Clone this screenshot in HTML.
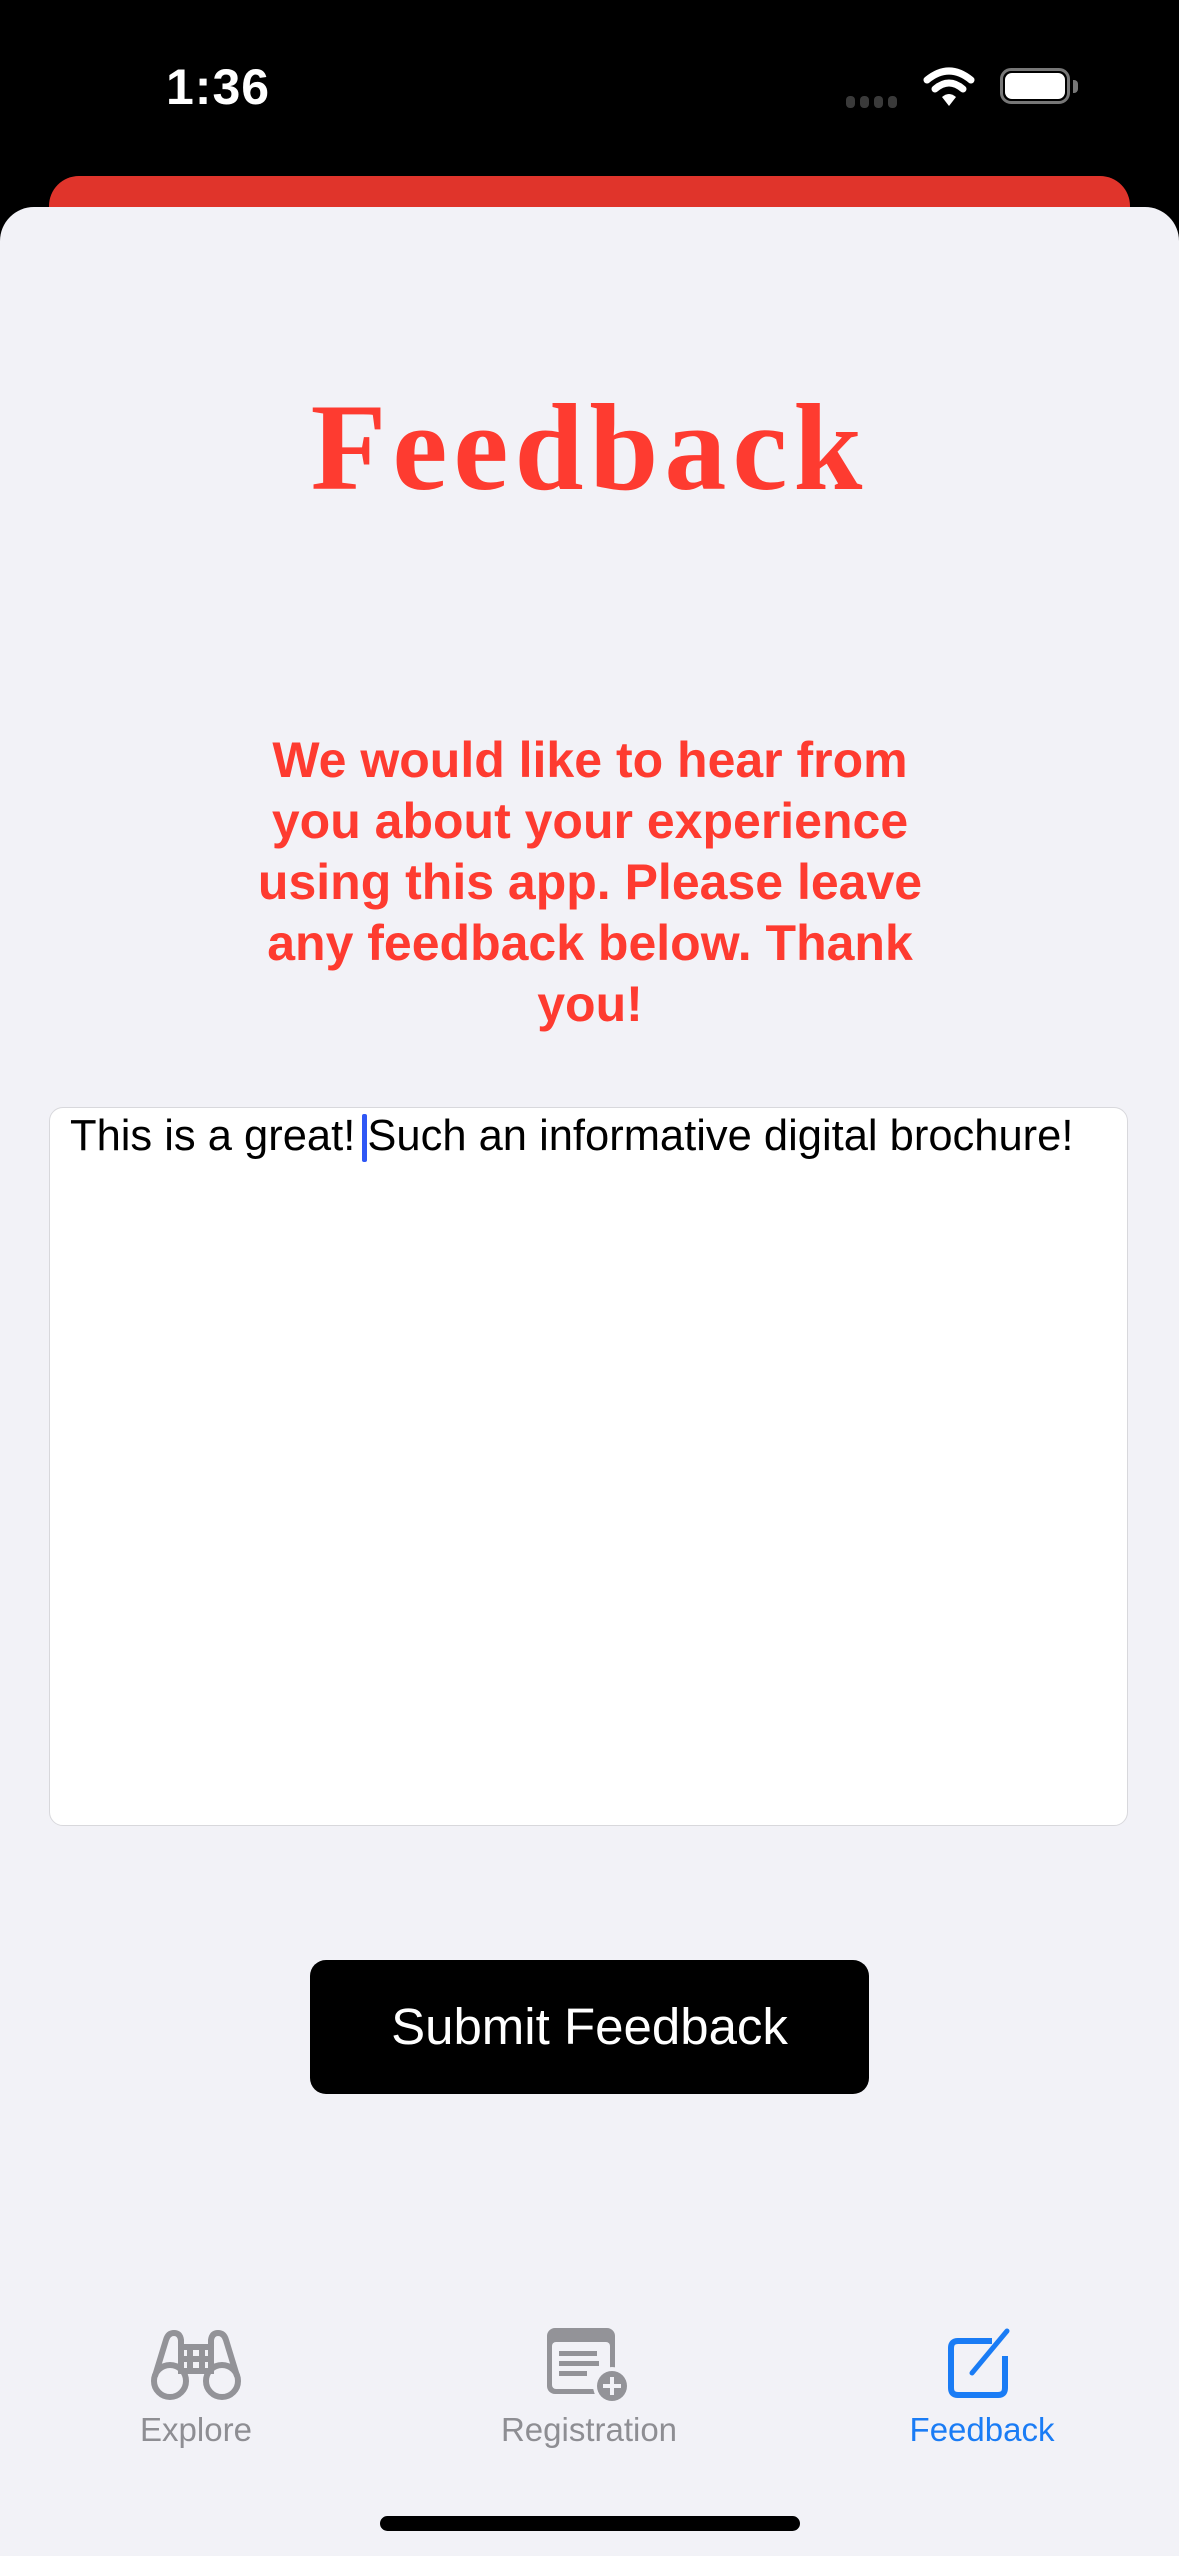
<!DOCTYPE html>
<html><head><meta charset="utf-8"><style>
body{margin:0;width:1179px;height:2556px;background:#000;position:relative;overflow:hidden;font-family:"Liberation Sans",sans-serif}
.abs{position:absolute}
</style></head><body>
<div class="abs" style="left:166px;top:58px;font-size:50px;font-weight:bold;color:#fff;letter-spacing:1px">1:36</div>
<div class="abs" style="left:846px;top:96px;width:12px;height:12px;display:flex;gap:5px">
<div style="width:9px;height:12px;border-radius:4px;background:#3a3a3a;flex:none"></div><div style="width:9px;height:12px;border-radius:4px;background:#3a3a3a;flex:none"></div><div style="width:9px;height:12px;border-radius:4px;background:#3a3a3a;flex:none"></div><div style="width:9px;height:12px;border-radius:4px;background:#3a3a3a;flex:none"></div></div>
<svg class="abs" style="left:922px;top:66px" width="54" height="42" viewBox="0 0 54 42"><g fill="none" stroke="#fff" stroke-width="7" stroke-linecap="round"><path d="M5 14 Q27 -4 49 14"/><path d="M13 23 Q27 11 41 23"/></g><path d="M20 31 Q27 25 34 31 L27 40 Z" fill="#fff"/></svg>
<div class="abs" style="left:1000px;top:68px;width:70px;height:36px;border:3px solid #777;border-radius:11px;box-sizing:border-box"></div>
<div class="abs" style="left:1005px;top:73px;width:60px;height:26px;background:#fff;border-radius:7px"></div>
<div class="abs" style="left:1073px;top:80px;width:5px;height:13px;background:#777;border-radius:0 4px 4px 0"></div>

<div class="abs" style="left:49px;top:176px;width:1081px;height:60px;background:#e0342b;border-radius:30px 30px 0 0"></div>
<div class="abs" style="left:0;top:207px;width:1179px;height:2349px;background:#f2f2f7;border-radius:34px 34px 0 0"></div>

<div class="abs" style="left:0;top:386px;width:1179px;text-align:center;font-family:'Liberation Serif',serif;font-weight:bold;font-size:124px;letter-spacing:6px;color:#fe3b30;line-height:1">Feedback</div>
<div class="abs" style="left:240px;top:730px;width:700px;text-align:center;font-size:50px;font-weight:bold;color:#fe3b30;line-height:61px">We would like to hear from you about your experience using this app. Please leave any feedback below. Thank you!</div>

<div class="abs" style="left:49px;top:1107px;width:1079px;height:719px;background:#fff;border:1.5px solid #d8d8dc;border-radius:14px;box-sizing:border-box"></div>
<div class="abs" style="left:70px;top:1112px;font-size:43.5px;color:#000;white-space:nowrap">This is a great! Such an informative digital brochure!</div>
<div class="abs" style="left:362px;top:1114px;width:5px;height:48px;background:#2f57f5;border-radius:2px"></div>

<div class="abs" style="left:310px;top:1960px;width:559px;height:134px;background:#000;border-radius:16px;color:#fff;font-size:51px;text-align:center;line-height:134px">Submit Feedback</div>

<svg class="abs" style="left:150px;top:2330px" width="92" height="72" viewBox="0 0 92 72" fill="none" stroke="#939398" stroke-width="6"><circle cx="20" cy="51" r="16"/><circle cx="72" cy="51" r="16"/><path d="M5 46 L16 10 Q18 3 24 3 Q30 3 31 10 L31 44 M87 46 L76 10 Q74 3 68 3 Q62 3 61 10 L61 44 M31 17H61 M31 29H61 M31 41H61 M40 14V44 M52 14V44"/></svg>
<svg class="abs" style="left:547px;top:2328px" width="86" height="80" viewBox="0 0 86 80"><rect x="0" y="0" width="68" height="66" rx="8" fill="#939398"/><rect x="5" y="14" width="58" height="47" rx="4" fill="#f2f2f7"/><rect x="12" y="23" width="38" height="5" fill="#939398"/><rect x="12" y="33" width="40" height="5" fill="#939398"/><rect x="12" y="43" width="28" height="5" fill="#939398"/><circle cx="65" cy="58" r="19" fill="#f2f2f7"/><circle cx="65" cy="58" r="15" fill="#939398"/><path d="M65 49V67M56 58H74" stroke="#f2f2f7" stroke-width="4"/></svg>
<svg class="abs" style="left:946px;top:2326px" width="74" height="74" viewBox="0 0 74 74" fill="none" stroke="#1a7cf5" stroke-width="6"><path d="M46 15H12Q5 15 5 22V62Q5 69 12 69H52Q59 69 59 62V30"/><path d="M26 47 L61 5" stroke-width="5" stroke-linecap="round"/></svg>
<div class="abs" style="left:96px;top:2411px;width:200px;text-align:center;font-size:33px;color:#8e8e93">Explore</div>
<div class="abs" style="left:469px;top:2411px;width:240px;text-align:center;font-size:33px;color:#8e8e93">Registration</div>
<div class="abs" style="left:862px;top:2411px;width:240px;text-align:center;font-size:33px;color:#1a7cf5">Feedback</div>
<div class="abs" style="left:380px;top:2516px;width:420px;height:15px;background:#000;border-radius:8px"></div>
</body></html>
